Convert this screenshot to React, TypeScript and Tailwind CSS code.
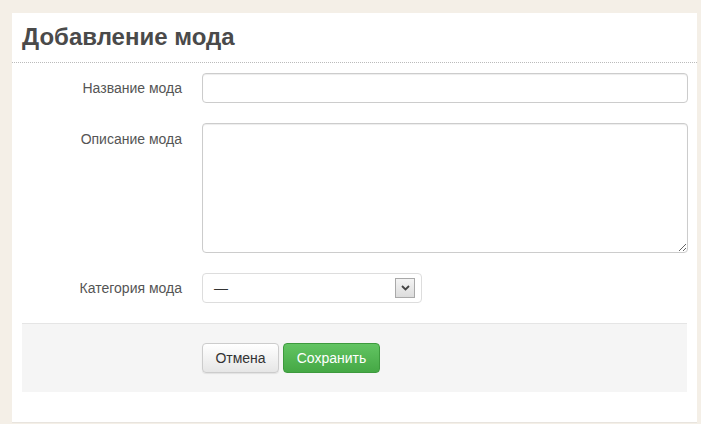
import React from "react";

export default function App() {
  return (
    <div className="h-[424px] w-[701px] overflow-hidden bg-[#f4efe7] pl-[12px] pr-[4px] pt-[13px] font-['Liberation_Sans',Arial,sans-serif]">
      <div className="h-[410px] bg-white border-b border-[#e8e4de]">
        {/* Header */}
        <div className="h-[50px] border-b border-dotted border-[#bbb] pl-[10px] pt-[10px]">
          <h1 className="text-[24px] font-bold leading-[28px] text-[#4a4a4a]">Добавление мода</h1>
        </div>

        {/* Form */}
        <div className="flex flex-col gap-[20px] pt-[10px] pr-[9px]">
          <div className="flex items-center">
            <label className="w-[170px] text-right text-[14px] text-[#555]">Название мода</label>
            <input
              type="text"
              className="ml-[20px] h-[30px] flex-1 rounded-[4px] border border-[#ccc] bg-white px-2 text-[14px] shadow-[inset_0_1px_1px_rgba(0,0,0,0.075)] outline-none"
            />
          </div>

          <div className="flex items-start">
            <label className="w-[170px] pt-[6px] text-right text-[14px] text-[#555]">Описание мода</label>
            <textarea className="ml-[20px] h-[130px] flex-1 resize rounded-[4px] border border-[#ccc] bg-white px-2 text-[14px] shadow-[inset_0_1px_1px_rgba(0,0,0,0.075)] outline-none" />
          </div>

          <div className="flex items-center">
            <label className="w-[170px] text-right text-[14px] text-[#555]">Категория мода</label>
            <div className="ml-[20px] flex h-[30px] w-[220px] items-center justify-between rounded-[4px] border border-[#ddd] bg-white pl-[11px] pr-[6px]">
              <span className="text-[14px] text-[#333]">—</span>
              <span className="flex h-[20px] w-[20px] items-center justify-center border border-[#a9a9a9] bg-gradient-to-b from-[#f4f4f4] to-[#dcdcdc]">
                <svg width="9" height="6" viewBox="0 0 9 6">
                  <path d="M1 1 L4.5 4.5 L8 1" fill="none" stroke="#444" strokeWidth="1.8" />
                </svg>
              </span>
            </div>
          </div>
        </div>

        {/* Actions */}
        <div className="mx-[10px] mt-[20px] flex h-[69px] gap-[4px] border-t border-[#e5e5e5] bg-[#f5f5f5] pl-[180px] pt-[19px]">
          <button className="h-[30px] w-[77px] rounded-[4px] border border-[#ccc] bg-gradient-to-b from-white to-[#e6e6e6] text-[14px] text-[#333] shadow-[0_1px_1px_rgba(0,0,0,0.08)]">
            Отмена
          </button>
          <button className="h-[30px] w-[97px] rounded-[4px] border border-[#3d9a3d] bg-gradient-to-b from-[#62c462] to-[#45a845] text-[14px] text-white">
            Сохранить
          </button>
        </div>
      </div>
    </div>
  );
}
